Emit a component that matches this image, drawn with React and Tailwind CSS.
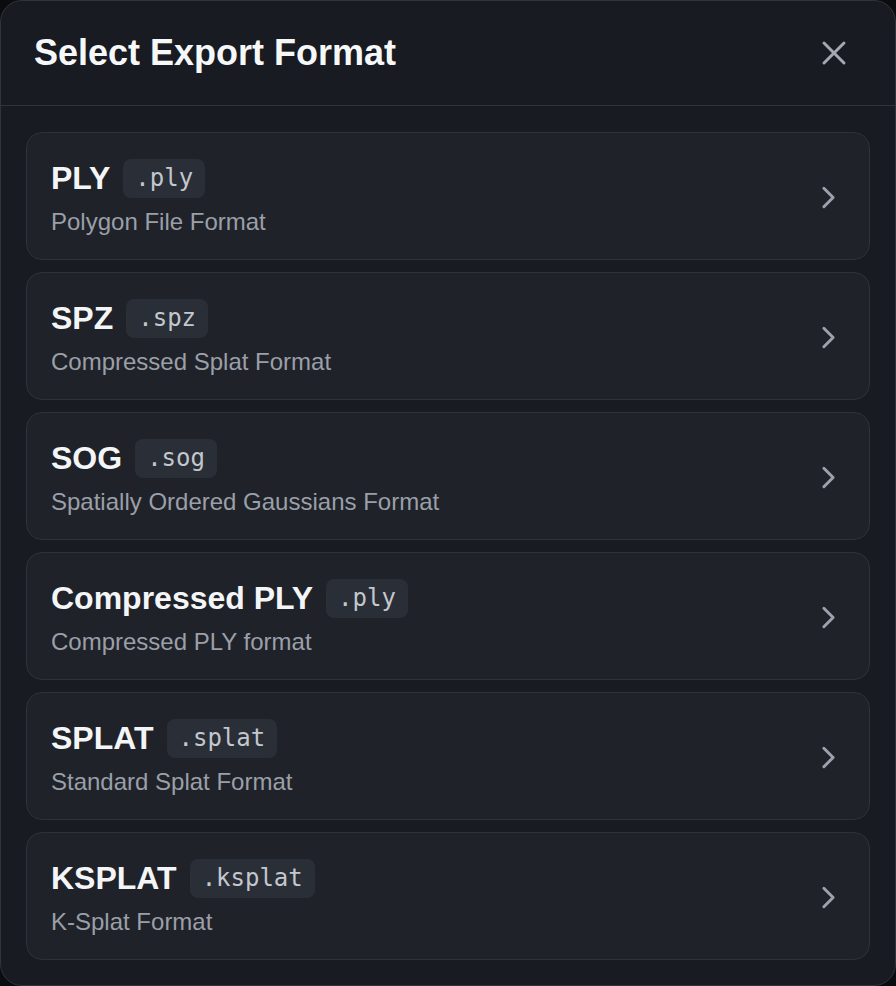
import React from "react";

const formats = [
  { name: "PLY", ext: ".ply", desc: "Polygon File Format" },
  { name: "SPZ", ext: ".spz", desc: "Compressed Splat Format" },
  { name: "SOG", ext: ".sog", desc: "Spatially Ordered Gaussians Format" },
  { name: "Compressed PLY", ext: ".ply", desc: "Compressed PLY format" },
  { name: "SPLAT", ext: ".splat", desc: "Standard Splat Format" },
  { name: "KSPLAT", ext: ".ksplat", desc: "K-Splat Format" },
];

function CloseIcon() {
  return (
    <svg width="40" height="40" viewBox="0 0 24 24" fill="none" stroke="currentColor" strokeWidth="1.8" strokeLinecap="round" strokeLinejoin="round">
      <path d="M18 6 6 18" />
      <path d="m6 6 12 12" />
    </svg>
  );
}

function Chevron() {
  return (
    <svg width="37" height="37" viewBox="0 0 24 24" fill="none" stroke="currentColor" strokeWidth="1.9" strokeLinecap="round" strokeLinejoin="round">
      <path d="m9 18 6-6-6-6" />
    </svg>
  );
}

function FormatCard({ name, ext, desc }) {
  return (
    <button className="flex h-[128px] w-full items-center justify-between rounded-2xl border border-[#2e323a] bg-[#1f2229] pl-6 pr-[22px] pt-[25px] pb-[21px] text-left">
      <div className="flex flex-col">
        <div className="flex h-10 items-center gap-[13px]">
          <span className="text-[32px] font-bold leading-[36px] text-[#f4f5f7]">{name}</span>
          <span
            className="flex h-[39px] items-center rounded-lg bg-[#2a2e36] px-3 text-[24px] text-[#c3c7ce]"
            style={{ fontFamily: '"DejaVu Sans Mono", "Liberation Mono", monospace' }}
          >
            {ext}
          </span>
        </div>
        <span className="mt-2 text-[24px] leading-[32px] text-[#9a9fa8]">{desc}</span>
      </div>
      <span className="mb-[2px] text-[#9ca1ab]">
        <Chevron />
      </span>
    </button>
  );
}

export default function App() {
  return (
    <div
      className="h-[986px] w-[896px] bg-[#0b0c0f]"
      style={{ fontFamily: '"Liberation Sans", Arial, sans-serif' }}
    >
      <div className="flex h-[986px] w-[896px] flex-col overflow-hidden rounded-[22px] border border-[#30343c] bg-[#181b21]">
        <div className="flex items-center justify-between border-b border-[#30343c] py-8 pl-[33px] pr-[41px]">
          <h2 className="text-[36px] font-bold leading-10 text-[#f6f7f9]">Select Export Format</h2>
          <span className="text-[#a3a8b1]">
            <CloseIcon />
          </span>
        </div>
        <div className="flex flex-col gap-3 px-[25px] pt-[26px] pb-[25px]">
          {formats.map((f) => (
            <FormatCard key={f.name} {...f} />
          ))}
        </div>
      </div>
    </div>
  );
}
